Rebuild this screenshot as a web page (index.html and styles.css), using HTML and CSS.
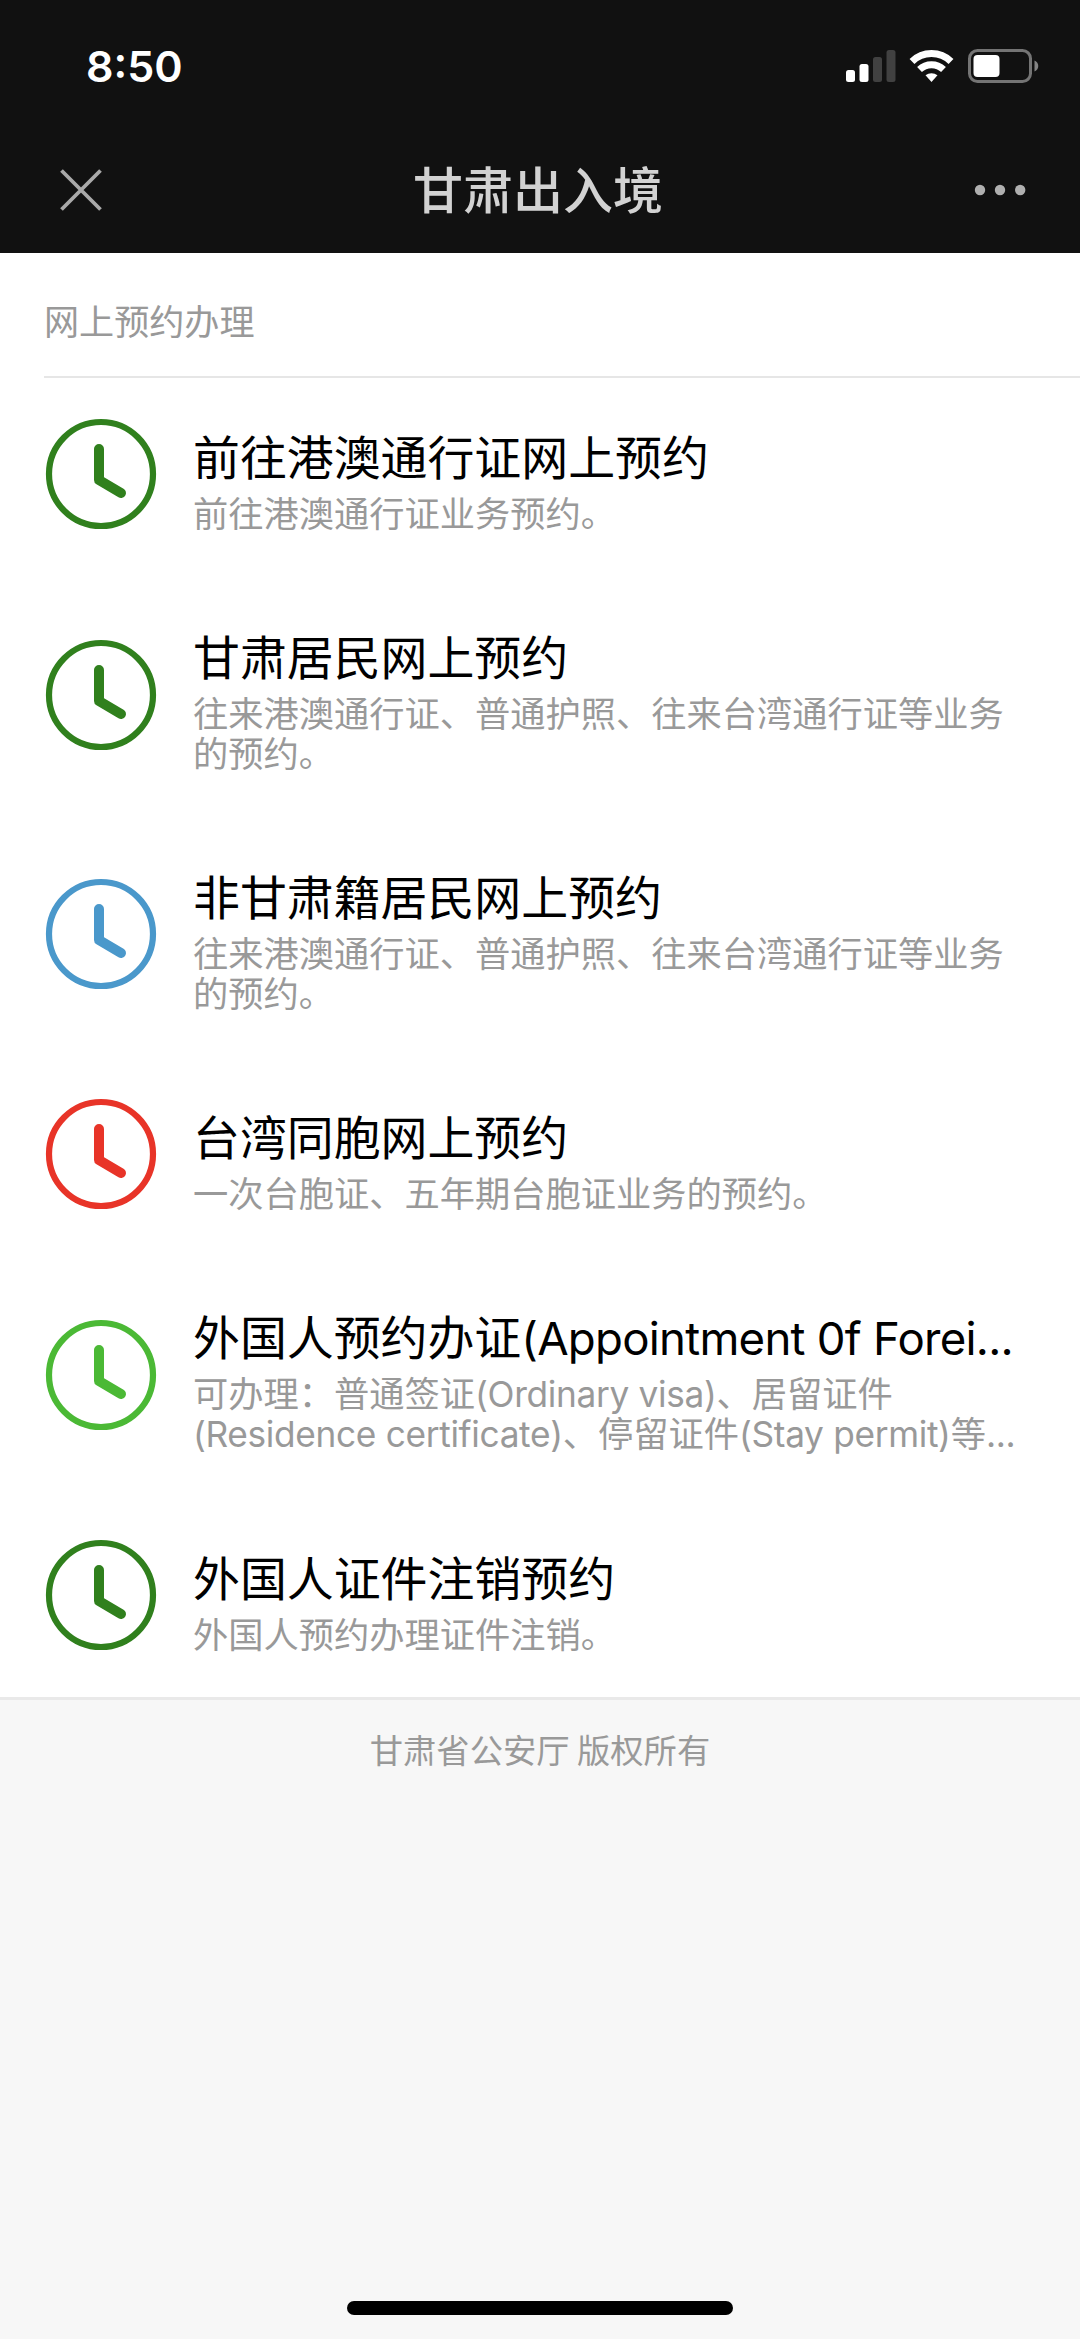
FILE: index.html
```html
<!DOCTYPE html>
<html lang="zh-CN">
<head>
<meta charset="utf-8">
<title>甘肃出入境</title>
<link rel="stylesheet" href="styles.css">
</head>
<body>
<svg class="defs" aria-hidden="true">
  <symbol id="clock" viewBox="0 0 112 112">
    <circle cx="56" cy="56" r="52" fill="none" stroke="currentColor" stroke-width="6.2"/>
    <path d="M54 31V62l22 13" fill="none" stroke="currentColor" stroke-width="10" stroke-linecap="round" stroke-linejoin="round"/>
  </symbol>
</svg>
<header class="top">
  <div class="status">
    <span class="time">8:50</span>
    <svg class="indicators" width="196" height="40" viewBox="0 0 196 40">
      <g fill="#fff">
        <rect x="1" y="24" width="9" height="12" rx="2.5"/>
        <rect x="14.500" y="18" width="9" height="18" rx="2.500"/>
      </g>
      <g fill="#414141">
        <rect x="28" y="11" width="9" height="25" rx="2.500"/>
        <rect x="41.500" y="4" width="9" height="32" rx="2.500"/>
      </g>
      <g fill="none" stroke="#fff" stroke-width="7">
        <path d="M67 15.500a28 28 0 0 1 39 0"/>
        <path d="M74.500 23.500a17.500 17.500 0 0 1 24 0"/>
      </g>
      <path d="M80.500 29.300a9.500 9.500 0 0 1 12 0L86.500 36z" fill="#fff"/>
      <rect x="124.500" y="4.500" width="61" height="31" rx="8" fill="none" stroke="#747474" stroke-width="3"/>
      <rect x="128.500" y="9" width="26" height="22" rx="4" fill="#fff"/>
      <path d="M189.500 14.500c5 2 5 9 0 11z" fill="#858585"/>
    </svg>
  </div>
  <nav class="nav">
    <svg class="close" width="42" height="44" viewBox="0 0 42 44"><path d="M1.500 2.500l39 39M40.500 2.500l-39 39" stroke="#a9a9a9" stroke-width="3.800"/></svg>
    <h1 class="nav-title">甘肃出入境</h1>
    <svg class="more" width="52" height="12" viewBox="0 0 52 12" fill="#b0b0b0"><circle cx="6" cy="6" r="5.200"/><circle cx="26" cy="6" r="5.200"/><circle cx="46.200" cy="6" r="5.200"/></svg>
  </nav>
</header>
<main class="panel">
  <h2 class="panel-title">网上预约办理</h2>
  <div class="item">
    <svg class="icon green"><use href="#clock"/></svg>
    <div class="text"><h3 class="name">前往港澳通行证网上预约</h3><p class="desc">前往港澳通行证业务预约。</p></div>
  </div>
  <div class="item two-line">
    <svg class="icon green"><use href="#clock"/></svg>
    <div class="text"><h3 class="name">甘肃居民网上预约</h3><p class="desc">往来港澳通行证、普通护照、往来台湾通行证等业务<br>的预约。</p></div>
  </div>
  <div class="item two-line">
    <svg class="icon blue"><use href="#clock"/></svg>
    <div class="text"><h3 class="name">非甘肃籍居民网上预约</h3><p class="desc">往来港澳通行证、普通护照、往来台湾通行证等业务<br>的预约。</p></div>
  </div>
  <div class="item">
    <svg class="icon red"><use href="#clock"/></svg>
    <div class="text"><h3 class="name">台湾同胞网上预约</h3><p class="desc">一次台胞证、五年期台胞证业务的预约。</p></div>
  </div>
  <div class="item two-line">
    <svg class="icon lime"><use href="#clock"/></svg>
    <div class="text"><h3 class="name">外国人预约办证<span class="latin">(Appointment 0f Forei...</span></h3><p class="desc">可办理：普通签证<span class="latin">(Ordinary visa)</span>、居留证件<br><span class="latin">(Residence certificate)</span>、停留证件<span class="latin">(Stay permit)</span>等<span class="latin">...</span></p></div>
  </div>
  <div class="item">
    <svg class="icon green"><use href="#clock"/></svg>
    <div class="text"><h3 class="name">外国人证件注销预约</h3><p class="desc">外国人预约办理证件注销。</p></div>
  </div>
</main>
<footer class="footer">
  <p class="copyright">甘肃省公安厅 版权所有</p>
  <div class="home-bar"></div>
</footer>
</body>
</html>
```
FILE: styles.css
```css
* { box-sizing: border-box; }
h1, h2, h3, p { margin: 0; font-weight: 400; }
body {
  margin: 0;
  height: 2339px;
  display: flex;
  flex-direction: column;
  background: #f7f7f7;
  font-family: "Noto Sans CJK SC", sans-serif;
  overflow: hidden;
}
.defs { display: none; }
.top { height: 253px; background: #111; flex: none; }
.status {
  height: 126px;
  padding: 6px 39px 0 86px;
  display: flex;
  align-items: center;
  justify-content: space-between;
}
.time {
  font: 600 43px/60px Inter, sans-serif;
  color: #fff;
}
.indicators { display: block; }
.nav {
  height: 127px;
  padding: 0 54px 0 60px;
  display: grid;
  grid-template-columns: 1fr auto 1fr;
  align-items: center;
}
.nav-title {
  margin: 0 10px 6px 0;
  font-size: 50px;
  line-height: 72px;
  font-weight: 500;
  color: #d2d2d2;
}
.more { justify-self: end; }
.panel {
  flex: none;
  height: 1447px;
  background: #fff;
  border-bottom: 3px solid #e9e9e9;
}
.panel-title {
  height: 125px;
  margin-left: 44px;
  border-bottom: 2px solid #e6e6e6;
  font-size: 35.1px;
  line-height: 134px;
  color: #999;
}
.item {
  display: flex;
  align-items: center;
  height: 201.3px;
  padding: 0 0 1px 45px;
}
.item.two-line { height: 239.3px; }
.icon {
  flex: none;
  width: 112px;
  height: 112px;
  margin: -7.4px 36px 0 0;
}
.green { color: #30801d; }
.blue { color: #4a98cb; }
.red { color: #e83428; }
.lime { color: #4bb935; }
.name, .desc { white-space: nowrap; }
.name {
  font-size: 46.9px;
  line-height: 62px;
  color: #000;
  margin-bottom: 6px;
}
.desc {
  font-size: 35.25px;
  line-height: 40px;
  color: #999;
}
.latin {
  font-family: Inter, sans-serif;
  line-height: 0;
}
.name .latin { font-size: 45.6px; letter-spacing: -0.75px; }
.desc .latin { letter-spacing: -0.33px; }
.footer {
  flex: 1;
  display: flex;
  flex-direction: column;
  align-items: center;
  justify-content: space-between;
  padding: 25px 0 24px;
}
.copyright {
  font-size: 33.3px;
  line-height: 48px;
  color: #999;
}
.home-bar {
  width: 386px;
  height: 14px;
  border-radius: 7px;
  background: #000;
}
```
